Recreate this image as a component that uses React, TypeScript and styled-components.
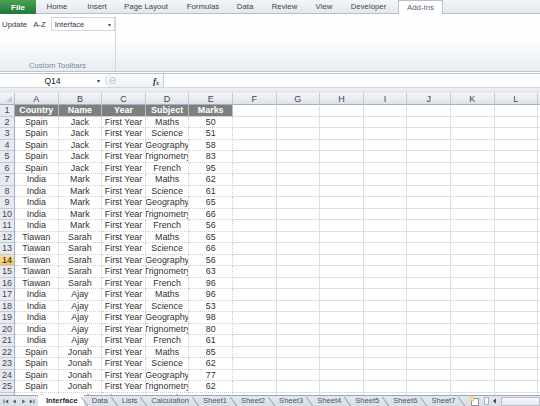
import styled, { createGlobalStyle } from "styled-components";

const GlobalStyle = createGlobalStyle`
  html, body { margin: 0; padding: 0; }
  body {
    font-family: "Liberation Sans", Arial, sans-serif;
    background: #fff;
    overflow: hidden;
  }
`;

const ribbonTabs = [
  { label: "Home", w: 42 },
  { label: "Insert", w: 38 },
  { label: "Page Layout", w: 60 },
  { label: "Formulas", w: 54 },
  { label: "Data", w: 30 },
  { label: "Review", w: 49 },
  { label: "View", w: 30 },
  { label: "Developer", w: 59 },
  { label: "Add-Ins", w: 45, active: true },
];

const columns = ["A", "B", "C", "D", "E", "F", "G", "H", "I", "J", "K", "L", "M"];

const subjects = ["Maths", "Science", "Geography", "Trignometry", "French"];
const people = [
  { country: "Spain", name: "Jack", marks: [50, 51, 58, 83, 95] },
  { country: "India", name: "Mark", marks: [62, 61, 65, 66, 56] },
  { country: "Tiawan", name: "Sarah", marks: [65, 66, 56, 63, 96] },
  { country: "India", name: "Ajay", marks: [96, 53, 98, 80, 61] },
  { country: "Spain", name: "Jonah", marks: [85, 62, 77, 62, 71] },
];

const rows: string[][] = [["Country", "Name", "Year", "Subject", "Marks"]];
people.forEach((p) =>
  p.marks.forEach((m, i) => rows.push([p.country, p.name, "First Year", subjects[i], String(m)]))
);

const sheetTabs = [
  "Interface",
  "Data",
  "Lists",
  "Calculation",
  "Sheet1",
  "Sheet2",
  "Sheet3",
  "Sheet4",
  "Sheet5",
  "Sheet6",
  "Sheet7",
];

const SELECTED_ROW = 14;

export default function App() {
  return (
    <>
      <GlobalStyle />
      <Window>
        <TabStrip>
          <FileTab>File</FileTab>
          {ribbonTabs.map((t) => (
            <RibbonTab key={t.label} $w={t.w} $active={!!t.active}>
              {t.label}
            </RibbonTab>
          ))}
        </TabStrip>

        <Ribbon>
          <Group>
            <GroupBody>
              <RibbonText>Update</RibbonText>
              <RibbonText>A-Z</RibbonText>
              <Combo>
                <span>Interface</span>
                <ComboArrow>▾</ComboArrow>
              </Combo>
            </GroupBody>
            <GroupLabel>Custom Toolbars</GroupLabel>
          </Group>
        </Ribbon>

        <FormulaBar>
          <NameBox>
            <span>Q14</span>
            <NameArrow>▾</NameArrow>
          </NameBox>
          <FxArea>
            <Grip>
              <svg width="7" height="7" viewBox="0 0 7 7">
                <circle cx="3.5" cy="3.5" r="3" fill="#eef0f3" stroke="#b8bec7" strokeWidth="0.8" />
                <line x1="2" y1="3.5" x2="5" y2="3.5" stroke="#b8bec7" strokeWidth="0.8" />
              </svg>
            </Grip>
            <Fx>
              f<sub>x</sub>
            </Fx>
          </FxArea>
          <FormulaInput />
        </FormulaBar>

        <BarGap />

        <Sheet>
          <Corner>
            <svg width="6" height="6" viewBox="0 0 6 6">
              <polygon points="6,0 6,6 0,6" fill="#c3cad3" />
            </svg>
          </Corner>
          {columns.map((c) => (
            <ColHead key={c}>{c}</ColHead>
          ))}
          {Array.from({ length: 27 }, (_, r) => {
            const rowNo = r + 1;
            const data = rows[r];
            return [
              <RowHead key={`h${rowNo}`} $selected={rowNo === SELECTED_ROW}>
                {rowNo}
              </RowHead>,
              ...columns.map((c, ci) => {
                const value = data && ci < 5 ? data[ci] : "";
                const inTable = !!data && ci < 5;
                return (
                  <Cell key={`${c}${rowNo}`} $header={rowNo === 1 && inTable} $table={inTable && rowNo > 1}>
                    {value && <CellText>{value}</CellText>}
                  </Cell>
                );
              }),
            ];
          })}
        </Sheet>

        <SheetBar>
          <NavButtons>
            <NavIcon viewBox="0 0 8 6">
              <rect x="0.5" y="0.5" width="1" height="5" fill="#4b5563" />
              <polygon points="6,0.5 2.5,3 6,5.5" fill="#4b5563" />
            </NavIcon>
            <NavIcon viewBox="0 0 8 6">
              <polygon points="5.5,0.5 2,3 5.5,5.5" fill="#4b5563" />
            </NavIcon>
            <NavIcon viewBox="0 0 8 6">
              <polygon points="2.5,0.5 6,3 2.5,5.5" fill="#4b5563" />
            </NavIcon>
            <NavIcon viewBox="0 0 8 6">
              <polygon points="2,0.5 5.5,3 2,5.5" fill="#4b5563" />
              <rect x="6.5" y="0.5" width="1" height="5" fill="#4b5563" />
            </NavIcon>
          </NavButtons>
          {sheetTabs.map((t, i) => (
            <SheetTab key={t} $active={i === 0}>
              {t}
            </SheetTab>
          ))}
          <InsertSheet>
            <svg width="11" height="10" viewBox="0 0 11 10">
              <rect x="2.5" y="2.5" width="7" height="7" fill="#fff" stroke="#8d96a3" />
              <circle cx="3" cy="3" r="2.4" fill="#f2b640" />
              <path d="M3 1.2v3.6M1.2 3h3.6" stroke="#fff" strokeWidth="0.9" />
            </svg>
          </InsertSheet>
          <Splitter />
          <ScrollArrow>
            <svg width="5" height="6" viewBox="0 0 5 6">
              <polygon points="4,0.5 1,3 4,5.5" fill="#3b4350" />
            </svg>
          </ScrollArrow>
          <ScrollTrack />
        </SheetBar>
      </Window>
    </>
  );
}

const Window = styled.div`
  width: 540px;
  height: 406px;
  display: flex;
  flex-direction: column;
  overflow: hidden;
  background: #fff;
`;

const TabStrip = styled.div`
  height: 14px;
  flex: none;
  display: flex;
  align-items: flex-end;
  background: linear-gradient(#f3f5f8, #e3e8ee);
  border-bottom: 1px solid #b9c0ca;
  box-sizing: border-box;
`;

const FileTab = styled.div`
  width: 36px;
  height: 14px;
  flex: none;
  display: flex;
  align-items: center;
  justify-content: center;
  color: #fff;
  font-size: 8px;
  font-weight: bold;
  background: linear-gradient(#4aa252, #22793a);
  align-self: flex-start;
`;

const RibbonTab = styled.div<{ $w: number; $active: boolean }>`
  width: ${(p) => p.$w}px;
  height: 13px;
  flex: none;
  display: flex;
  align-items: center;
  justify-content: center;
  font-size: 7.8px;
  color: ${(p) => (p.$active ? "#54627a" : "#3c4452")};
  box-sizing: border-box;
  ${(p) =>
    p.$active &&
    `
    background: #fff;
    border: 1px solid #b9c0ca;
    border-bottom: none;
    height: 14px;
    margin-bottom: -1px;
  `}
`;

const Ribbon = styled.div`
  height: 57px;
  flex: none;
  display: flex;
  background: linear-gradient(#fff 0%, #fdfdfe 45%, #e9edf1 100%);
  border-bottom: 3px double #bcc3cc;
`;

const Group = styled.div`
  width: 116px;
  flex: none;
  display: flex;
  flex-direction: column;
  justify-content: space-between;
  border-right: 1px solid #d3d8de;
  margin: 2px 0 0;
  box-sizing: border-box;
`;

const GroupBody = styled.div`
  display: flex;
  align-items: center;
  gap: 6px;
  padding: 1px 2px 0 2px;
`;

const RibbonText = styled.span`
  flex: none;
  white-space: nowrap;
  font-size: 7.8px;
  color: #343c48;
`;

const Combo = styled.div`
  width: 64px;
  height: 14px;
  flex: none;
  margin-left: -1px;
  display: flex;
  align-items: center;
  justify-content: space-between;
  padding: 0 3px 0 3px;
  box-sizing: border-box;
  border: 1px solid #d2d7dd;
  background: #fff;
  font-size: 7.6px;
  color: #2d3440;
`;

const ComboArrow = styled.span`
  font-size: 6px;
  color: #555;
`;

const GroupLabel = styled.div`
  text-align: center;
  font-size: 7.6px;
  color: #7d8897;
  padding-bottom: 1px;
`;

const FormulaBar = styled.div`
  height: 14px;
  flex: none;
  display: flex;
  align-items: stretch;
  border-bottom: 1px solid #d3d8de;
  box-sizing: border-box;
`;

const NameBox = styled.div`
  width: 105px;
  flex: none;
  display: flex;
  align-items: center;
  justify-content: center;
  position: relative;
  font-size: 8.6px;
  color: #222;
`;

const NameArrow = styled.span`
  position: absolute;
  right: 5px;
  font-size: 6px;
  color: #444;
`;

const FxArea = styled.div`
  width: 58px;
  flex: none;
  display: flex;
  align-items: center;
  justify-content: space-between;
  padding: 0 4px 0 3px;
  box-sizing: border-box;
  border-left: 1px solid #c8ced6;
  border-radius: 7px 0 0 7px;
  background: linear-gradient(#fbfbfc, #eef1f4);
`;

const Grip = styled.span`
  display: flex;
  align-items: center;
`;

const Fx = styled.span`
  font-family: "Liberation Serif", "Times New Roman", serif;
  font-style: italic;
  font-weight: bold;
  font-size: 9px;
  color: #333;
  sub {
    font-size: 6px;
    vertical-align: -1px;
  }
`;

const FormulaInput = styled.div`
  flex: 1;
  border-left: 1px solid #c8ced6;
  background: #fff;
`;

const BarGap = styled.div`
  height: 5px;
  flex: none;
  background: linear-gradient(#eef1f5, #e2e7ed);
`;

const Sheet = styled.div`
  flex: 1;
  min-height: 0;
  overflow: hidden;
  display: grid;
  grid-template-columns: 15px repeat(13, 43.6px);
  grid-template-rows: 12px;
  grid-auto-rows: 11.5px;
  font-size: 8.9px;
`;

const Corner = styled.div`
  display: flex;
  align-items: flex-end;
  justify-content: flex-end;
  padding: 0 2px 2px 0;
  box-sizing: border-box;
  background: linear-gradient(#f5f7f9, #dfe4ea);
  border-right: 1px solid #b6bfca;
  border-bottom: 1px solid #9eb1c6;
`;

const ColHead = styled.div`
  display: flex;
  align-items: center;
  justify-content: center;
  background: linear-gradient(#f6f7f9, #dde2e8);
  border-right: 1px solid #c3cad3;
  border-bottom: 1px solid #9eb1c6;
  box-sizing: border-box;
  color: #3e4652;
  font-size: 9px;
`;

const RowHead = styled.div<{ $selected: boolean }>`
  display: flex;
  align-items: center;
  justify-content: center;
  box-sizing: border-box;
  border-right: 1px solid #9eb1c6;
  border-bottom: 1px solid #c3cad3;
  background: ${(p) => (p.$selected ? "linear-gradient(#fbe3a6, #f3c35a)" : "#e7ebf0")};
  color: ${(p) => (p.$selected ? "#1a1a1a" : "#3e4652")};
  font-size: 9px;
`;

const Cell = styled.div<{ $header: boolean; $table: boolean }>`
  display: flex;
  align-items: center;
  justify-content: center;
  overflow: hidden;
  white-space: nowrap;
  box-sizing: border-box;
  border-right: 1px ${(p) => (p.$table ? "dotted #cfcfcf" : "solid #dde1e6")};
  border-bottom: 1px ${(p) => (p.$table ? "dotted #cfcfcf" : "solid #dde1e6")};
  ${(p) =>
    p.$header &&
    `
    background: #7f7f7f;
    font-weight: bold;
    border-right: 1px solid #bdbdbd;
    border-bottom: 1px solid #d0d0d0;
  `}
  color: ${(p) => (p.$header ? "#fff" : "#333")};
`;

const CellText = styled.span`
  flex: none;
`;

const SheetBar = styled.div`
  height: 11px;
  flex: none;
  display: flex;
  align-items: stretch;
  background: linear-gradient(#e4e8ee, #d8dee5);
  border-top: 1px solid #9ba6b4;
  box-sizing: border-box;
  font-size: 7.6px;
  color: #4b5563;
`;

const NavButtons = styled.div`
  width: 38px;
  flex: none;
  display: flex;
  align-items: center;
  justify-content: space-around;
  padding: 0 2px;
  box-sizing: border-box;
`;

const NavIcon = styled.svg`
  width: 7px;
  height: 5px;
`;

const SheetTab = styled.div<{ $active: boolean }>`
  position: relative;
  flex: none;
  display: flex;
  align-items: center;
  padding: 0 6px 0 8px;
  margin-top: -1px;
  font-weight: ${(p) => (p.$active ? "bold" : "normal")};
  color: ${(p) => (p.$active ? "#1f2937" : "#4b5563")};
  background: ${(p) => (p.$active ? "#fff" : "transparent")};
  &::after {
    content: "";
    position: absolute;
    right: -1px;
    top: 2px;
    bottom: 0;
    border-left: 1px solid #8f99a6;
    transform: skewX(35deg);
  }
`;

const InsertSheet = styled.div`
  flex: none;
  display: flex;
  align-items: center;
  margin-left: 8px;
`;

const Splitter = styled.div`
  width: 3px;
  flex: none;
  margin: 1px 2px 1px 4px;
  border: 1px solid #a9b2bd;
  background: #f4f6f8;
`;

const ScrollArrow = styled.div`
  width: 7px;
  flex: none;
  display: flex;
  align-items: center;
  justify-content: center;
`;

const ScrollTrack = styled.div`
  flex: 1;
  margin: 1px 0 0 3px;
  border: 1px solid #b7c0cb;
  background: linear-gradient(#f6f7f9, #e7ebf0);
`;
